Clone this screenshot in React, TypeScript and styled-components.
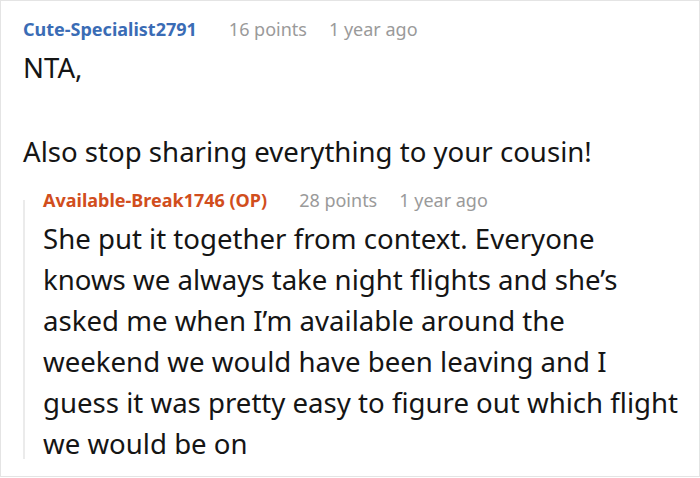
import styled, { createGlobalStyle } from 'styled-components';

const GlobalStyle = createGlobalStyle`
  html, body {
    margin: 0;
    padding: 0;
    background: #ffffff;
  }

  body {
    font-family: 'Noto Sans', 'Open Sans', sans-serif;
  }
`;

interface IComment {
  author: string;
  points: number;
  age: string;
  isOp?: boolean;
  paragraphs: string[];
}

const parent: IComment = {
  author: 'Cute-Specialist2791',
  points: 16,
  age: '1 year ago',
  paragraphs: ['NTA,', 'Also stop sharing everything to your cousin!'],
};

const reply: IComment = {
  author: 'Available-Break1746 (OP)',
  points: 28,
  age: '1 year ago',
  isOp: true,
  paragraphs: [
    'She put it together from context. Everyone knows we always take night flights and she\u2019s asked me when I\u2019m available around the weekend we would have been leaving and I guess it was pretty easy to figure out which flight we would be on',
  ],
};

function CommentBody({ comment }: { comment: IComment }) {
  return (
    <>
      <Meta>
        <Author $op={comment.isOp}>{comment.author}</Author>
        <MetaText>{comment.points} points</MetaText>
        <MetaText>{comment.age}</MetaText>
      </Meta>
      {comment.paragraphs.map((p) => (
        <Paragraph key={p}>{p}</Paragraph>
      ))}
    </>
  );
}

export default function App() {
  return (
    <>
      <GlobalStyle />
      <Frame>
        <Comment>
          <CommentBody comment={parent} />
        </Comment>
        <Reply>
          <CommentBody comment={reply} />
        </Reply>
      </Frame>
    </>
  );
}

const Frame = styled.div`
  width: 700px;
  height: 477px;
  box-sizing: border-box;
  border: 1px solid #e4e4e4;
  padding: 16px 15px 0 22px;
  overflow: hidden;
`;

const Comment = styled.div`
  display: flex;
  flex-direction: column;
`;

const Reply = styled.div`
  position: relative;
  margin-top: 16px;
  padding-left: 20px;
  display: flex;
  flex-direction: column;

  &::before {
    content: '';
    position: absolute;
    left: 0;
    top: 12px;
    height: 259px;
    width: 2px;
    background: #ebebeb;
  }
`;

const Meta = styled.div`
  display: flex;
  align-items: baseline;
  gap: 22px;
  height: 24px;
  line-height: 24px;
  font-size: 18px;
  margin-bottom: 6px;
  white-space: nowrap;
`;

const Author = styled.span<{ $op?: boolean }>`
  font-weight: 700;
  color: ${({ $op }) => ($op ? '#d14e1d' : '#3a6cb5')};
  margin-right: 10px;
`;

const MetaText = styled.span`
  color: #9a9a9a;
`;

const Paragraph = styled.p`
  margin: 0;
  font-size: 27.6px;
  line-height: 41px;
  color: #151515;

  & + & {
    margin-top: 43px;
  }
`;
